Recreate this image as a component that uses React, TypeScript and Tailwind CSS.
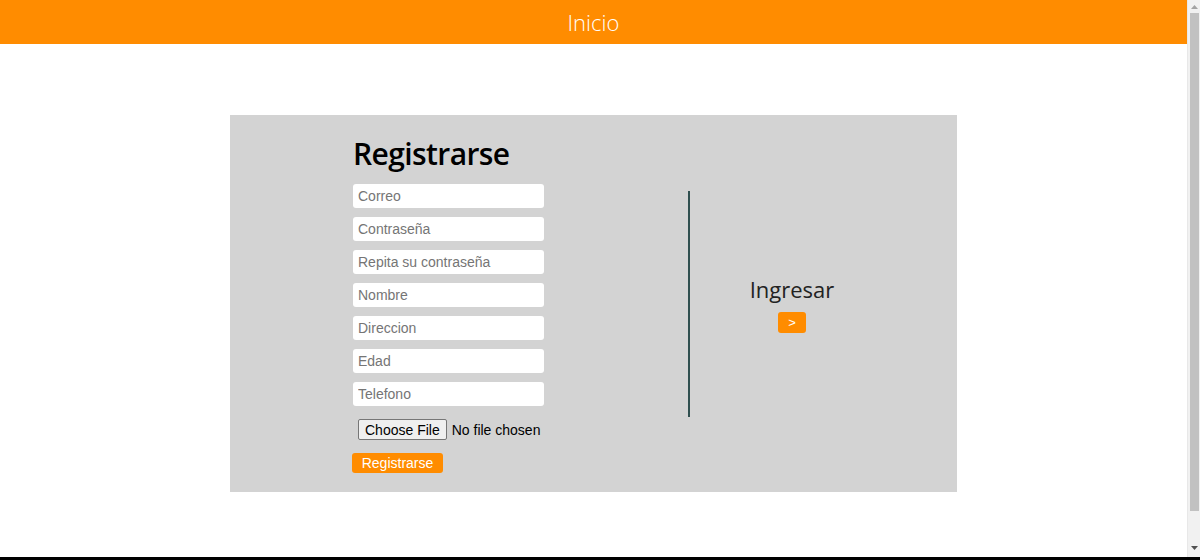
import React from "react";

const poppins = { fontFamily: '"Open Sans", "Noto Sans", sans-serif' };

function Scrollbar() {
  return (
    <aside className="flex h-full w-[13px] shrink-0 flex-col items-center border-l border-[#e8e8e8] bg-[#f1f1f1]">
      <svg width="9" height="12" viewBox="0 0 9 12" className="mt-[1px] shrink-0">
        <path d="M1 8 L4.5 4 L8 8 Z" fill="#a3a3a3" />
      </svg>
      <div className="h-[498px] w-[9px] shrink-0 bg-[#c1c1c1]" />
      <div className="flex-1" />
      <svg width="9" height="12" viewBox="0 0 9 12" className="mb-[3px] shrink-0">
        <path d="M1 4 L4.5 8 L8 4 Z" fill="#505050" />
      </svg>
    </aside>
  );
}

export default function App() {
  const fields = [
    "Correo",
    "Contraseña",
    "Repita su contraseña",
    "Nombre",
    "Direccion",
    "Edad",
    "Telefono",
  ];
  return (
    <div className="flex h-[560px] flex-col overflow-hidden bg-white font-['Liberation_Sans',Arial,sans-serif]">
      <div className="flex h-[557px]">
        <div className="flex min-w-0 flex-1 flex-col">
          <header className="flex h-[44px] items-center justify-center bg-[#ff8c00]">
            <h1
              className="text-[22px] font-light leading-none text-white"
              style={poppins}
            >
              Inicio
            </h1>
          </header>
          <main className="flex justify-center pt-[71px]">
            <div className="flex h-[377px] w-[727px] items-center bg-[#d3d3d3]">
              <form
                className="flex w-[458px] flex-col self-start pl-[123px] pt-[20px]"
                onSubmit={(e) => e.preventDefault()}
              >
                <h2
                  className="mb-[11px] h-[38px] text-[30px] font-semibold leading-[38px] tracking-[-0.6px] text-black"
                  style={poppins}
                >
                  Registrarse
                </h2>
                <div className="flex flex-col gap-[9px]">
                  {fields.map((f) => (
                    <input
                      key={f}
                      type={f.startsWith("Contra") || f.startsWith("Repita") ? "password" : "text"}
                      placeholder={f}
                      className="h-[24px] w-[191px] rounded-[3px] bg-white px-[5px] text-[14px] text-black outline-none placeholder:text-[#757575]"
                    />
                  ))}
                </div>
                <input
                  type="file"
                  className="ml-[5px] mt-[13px] h-[21px] text-[14px] leading-[21px] text-black file:mr-[5px] file:h-[21px] file:rounded-[2px] file:border file:border-solid file:border-[#767676] file:bg-[#efefef] file:px-[6px] file:text-black"
                />
                <button
                  type="submit"
                  className="-ml-px mt-[13px] h-[20px] w-[91px] rounded-[3px] bg-[#ff8c00] text-[14px] leading-[20px] text-white"
                >
                  Registrarse
                </button>
              </form>
              <div className="h-[226px] w-[2px] bg-[#2f4f4f]" />
              <div className="flex w-[204px] flex-col items-center">
                <p className="text-[22px] leading-[30px] text-[#222]" style={poppins}>
                  Ingresar
                </p>
                <button className="mt-[8px] h-[21px] w-[28px] rounded-[3px] bg-[#ff8c00] text-[13px] leading-[21px] text-white">
                  &gt;
                </button>
              </div>
            </div>
          </main>
        </div>
        <Scrollbar />
      </div>
      <footer className="h-[3px] shrink-0 bg-black" />
    </div>
  );
}
